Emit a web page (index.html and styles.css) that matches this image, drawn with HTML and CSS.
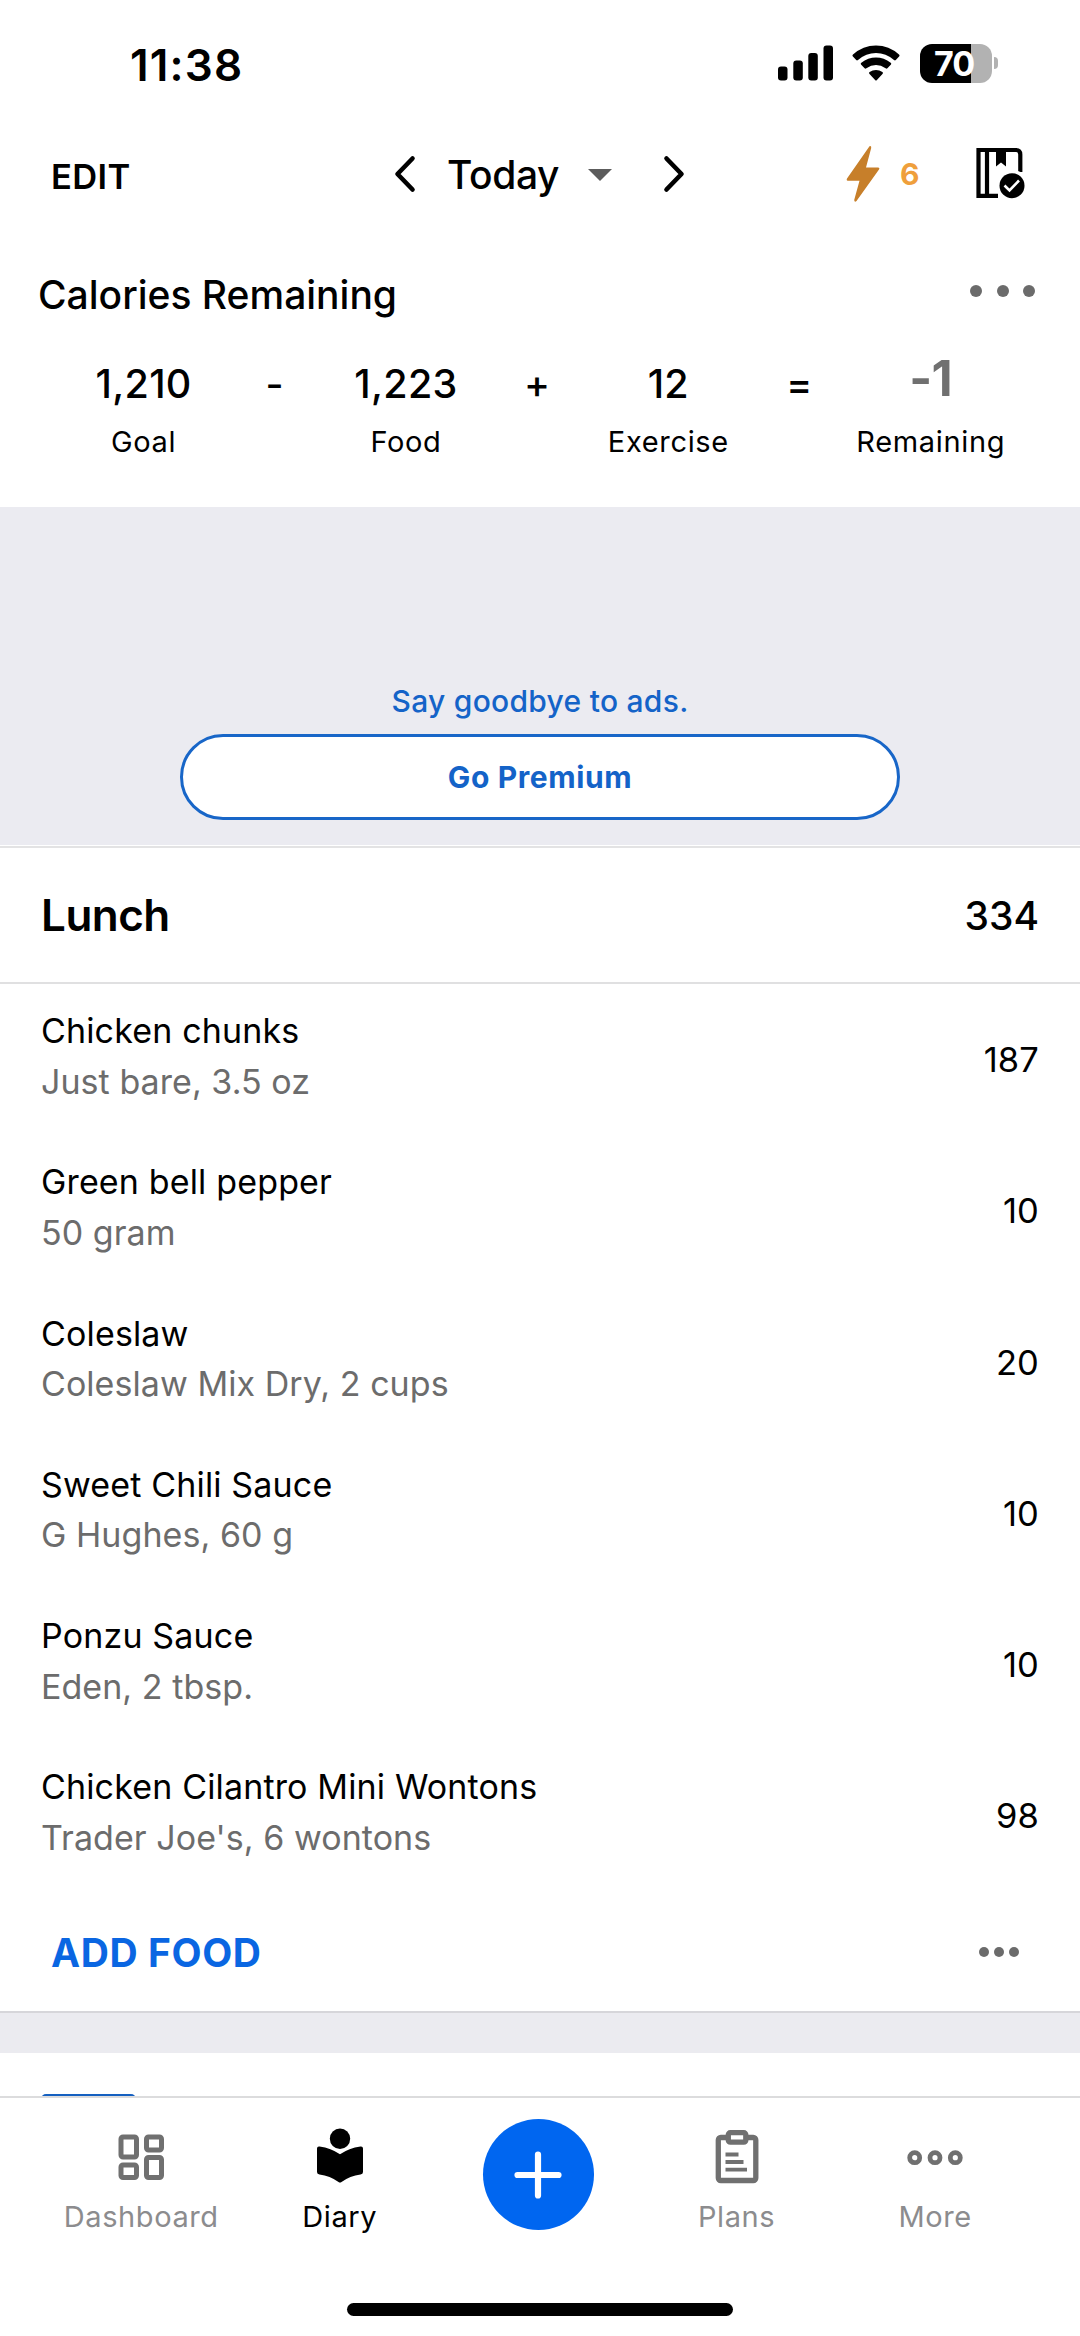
FILE: index.html
```html
<!DOCTYPE html>
<html lang="en">
<head>
<meta charset="utf-8">
<title>Diary</title>
<link rel="stylesheet" href="styles.css">
</head>
<body>
<div class="phone">
  <header class="status">
    <span class="time">11:38</span>
    <div class="status-icons">
      <svg class="signal" width="56" height="36" viewBox="0 0 56 36"><rect x="0" y="21.500" width="9.500" height="14" rx="3"/><rect x="15.300" y="15.500" width="9.500" height="20" rx="3"/><rect x="30.300" y="8" width="9.500" height="27.500" rx="3"/><rect x="45.500" y="0.500" width="9.500" height="35" rx="3"/></svg>
      <svg class="wifi" width="48" height="36" viewBox="0 0 48 36"><path d="M0.700 11.200Q0 10.300 1 9.500Q11 .5 24 .5T47 9.500Q48 10.300 47.300 11.200L43.800 15Q43 15.800 42 15Q34 8 24 8T6 15Q5 15.800 4.200 15Z"/><path d="M9 19.500Q8.300 18.600 9.300 17.800Q16 12.600 24 12.600T38.700 17.800Q39.700 18.600 39 19.500L35.400 23.300Q34.600 24 33.600 23.300Q29 20 24 20T14.400 23.300Q13.400 24 12.600 23.300Z"/><path d="M17.300 28.700Q16.600 27.800 17.600 27.100Q20.500 25 24 25T30.400 27.100Q31.400 27.800 30.700 28.700L24.700 35.200Q24 35.800 23.300 35.200Z"/></svg>
      <div class="battery"><span>70</span></div>
      <i class="battery-tip"></i>
    </div>
  </header>

  <nav class="topbar">
    <span class="edit">EDIT</span>
    <div class="date">
      <svg width="22" height="38" viewBox="0 0 22 38"><path d="M18.500 3.500L3.500 19L18.500 34.500"/></svg>
      <span class="today">Today</span>
      <i class="caret"></i>
      <svg width="22" height="38" viewBox="0 0 22 38"><path d="M3.500 3.500L18.500 19L3.500 34.500"/></svg>
    </div>
    <div class="streak">
      <svg width="34" height="58" viewBox="0 0 34 58"><path d="M23.500 1.200Q25.500 .5 25.200 3L20 22.500H32Q34 22.600 33 24.500L10.500 56Q8.500 58 8.200 55L13.500 35.800H1.500Q0 35.500 1 33.500Z"/></svg>
      <span>6</span>
    </div>
    <svg class="book" width="50" height="52" viewBox="0 0 50 52"><path d="M2.500 3H40Q44.300 3 44.300 7.500V25M2.500 1V51M11 3V49M2.500 48.800H22" fill="none" stroke="#000" stroke-width="4.200"/><path d="M20 3H30V19.500L25 15.500L20 19.500Z"/><circle cx="36" cy="38.700" r="16" fill="#fff"/><circle cx="36" cy="38.700" r="12.500"/><path d="M28.500 38.500L33.500 43.500L43 33.500" fill="none" stroke="#fff" stroke-width="2.600"/></svg>
  </nav>

  <section class="summary">
    <div class="summary-head"><h2>Calories Remaining</h2><div class="dots"><i></i><i></i><i></i></div></div>
    <div class="equation">
      <div class="term"><b>1,210</b><span>Goal</span></div>
      <div class="term"><b class="op">-</b></div>
      <div class="term"><b>1,223</b><span>Food</span></div>
      <div class="term"><b class="op">+</b></div>
      <div class="term"><b>12</b><span>Exercise</span></div>
      <div class="term"><b class="op">=</b></div>
      <div class="term"><b class="result">-1</b><span>Remaining</span></div>
    </div>
  </section>

  <section class="ad">
    <p>Say goodbye to ads.</p>
    <div class="premium">Go Premium</div>
  </section>

  <section class="meal">
    <div class="meal-head"><h1>Lunch</h1><span>334</span></div>
    <ul>
      <li><div><p>Chicken chunks</p><p class="sub">Just bare, 3.5 oz</p></div><span>187</span></li>
      <li><div><p>Green bell pepper</p><p class="sub">50 gram</p></div><span>10</span></li>
      <li><div><p>Coleslaw</p><p class="sub">Coleslaw Mix Dry, 2 cups</p></div><span>20</span></li>
      <li><div><p>Sweet Chili Sauce</p><p class="sub">G Hughes, 60 g</p></div><span>10</span></li>
      <li><div><p>Ponzu Sauce</p><p class="sub">Eden, 2 tbsp.</p></div><span>10</span></li>
      <li><div><p>Chicken Cilantro Mini Wontons</p><p class="sub">Trader Joe's, 6 wontons</p></div><span>98</span></li>
    </ul>
    <div class="add"><span>ADD FOOD</span><div class="dots small"><i></i><i></i><i></i></div></div>
  </section>
  <div class="gap"></div>
  <section class="next"><div class="next-tab"></div></section>

  <footer class="tabs">
    <div class="tab"><svg width="56" height="56" viewBox="0 0 56 56"><g fill="none" stroke="#707070" stroke-width="5"><rect x="8" y="8" width="15.500" height="20" rx="2"/><rect x="33.500" y="8" width="15" height="13" rx="2"/><rect x="8" y="36" width="15.500" height="12.500" rx="2"/><rect x="33.500" y="28.500" width="15" height="20" rx="2"/></g></svg><span>Dashboard</span></div>
    <div class="tab active"><svg width="56" height="56" viewBox="0 0 56 56"><circle cx="28" cy="9.700" r="10.200"/><path d="M5 19.500Q5 17.200 7.500 17.500Q19 19.200 28 25.200Q37 19.200 48.500 17.500Q51 17.200 51 19.500V43Q51 45.200 48.500 45.400Q38 46.600 29.500 53Q28 54.200 26.500 53Q18 46.600 7.500 45.400Q5 45.200 5 43Z"/></svg><span>Diary</span></div>
    <div class="plus"><svg width="50" height="50" viewBox="0 0 50 50"><path d="M25 4.500V45.500M4.500 25H45.500" stroke="#fff" stroke-width="6.200" stroke-linecap="round"/></svg></div>
    <div class="tab"><svg width="56" height="56" viewBox="0 0 56 56"><g fill="none" stroke="#707070"><rect x="9.300" y="8.500" width="37.500" height="43" rx="2.500" stroke-width="5.300"/><rect x="19.300" y="3.700" width="17.500" height="9.500" rx="2" stroke-width="5.300" fill="#fff"/><path d="M16.500 25.500H29.500M16.500 33H34.500M16.500 40.700H38" stroke-width="3.800"/></g></svg><span>Plans</span></div>
    <div class="tab"><svg width="56" height="56" viewBox="0 0 56 56"><g fill="none" stroke="#707070" stroke-width="4.800"><circle cx="7.700" cy="28.700" r="5"/><circle cx="28" cy="28.700" r="5"/><circle cx="48.300" cy="28.700" r="5"/></g></svg><span>More</span></div>
  </footer>
  <div class="home"></div>
</div>
</body>
</html>
```
FILE: styles.css
```css
* { box-sizing: border-box; margin: 0; padding: 0; }
body { background: #fff; font-family: Inter, "Liberation Sans", sans-serif; color: #000; }
svg { display: block; flex: none; overflow: visible; }
ul { list-style: none; }
.phone { width: 1080px; height: 2336px; display: flex; flex-direction: column; overflow: hidden; background: #fff; white-space: nowrap; }
.phone > * { flex: none; }

.status { height: 130px; display: flex; align-items: center; justify-content: space-between; padding: 0 82px 0 130px; }
.time { font-size: 44px; font-weight: 600; letter-spacing: 1.2px; }
.status-icons { display: flex; align-items: center; height: 38px; margin-top: -4px; }
.wifi { margin-left: 18px; }
.battery { margin-left: 19.5px; width: 72px; height: 39px; border-radius: 12px; background: linear-gradient(to right, #000 51px, #b2b2b2 51px); color: #fff; font-size: 34px; font-weight: 700; display: flex; align-items: center; justify-content: center; padding-right: 3px; letter-spacing: -1px; }
.battery-tip { width: 4.5px; height: 12px; margin-left: 2px; border-radius: 0 5px 5px 0; background: #b2b2b2; }

.topbar { height: 88px; display: flex; align-items: center; padding-left: 51px; }
.edit { width: 343px; padding-top: 5px; font-size: 34.5px; font-weight: 600; letter-spacing: 0.4px; }
.date { display: flex; align-items: center; width: 292px; }
.date svg { fill: none; stroke: #000; stroke-width: 4.6; stroke-linecap: round; stroke-linejoin: round; }
.today { width: 142px; margin-left: 31px; font-size: 39px; font-weight: 500; padding-top: 1px; letter-spacing: -0.4px; }
.caret { width: 24px; height: 12px; margin: 2px 51px 0 -1px; flex: none; background: #5c5c5c; clip-path: polygon(0 0, 100% 0, 50% 100%); }
.streak { display: flex; align-items: center; width: 130px; margin-left: 160px; color: #ef9f3c; font-size: 30px; font-weight: 700; }
.streak svg { fill: #c77f2a; margin-right: 20px; }
.book { margin-top: -2px; }

.summary { height: 289px; padding-top: 46px; }
.summary-head { height: 60px; display: flex; justify-content: space-between; align-items: center; padding: 0 45px 0 38px; }
.summary-head h2 { font-size: 39px; font-weight: 500; }
.dots { display: flex; gap: 14.5px; margin-top: -6px; }
.dots i { width: 12px; height: 12px; border-radius: 50%; background: #6b6b6b; }
.equation { display: flex; margin: 31px 0 0 78px; }
.term { width: 131.2px; display: flex; flex-direction: column; align-items: center; }
.term b { height: 58px; line-height: 58px; font-size: 39.5px; font-weight: 500; letter-spacing: 0.3px; }
.term .op { font-size: 39px; }
.term .result { font-size: 49px; font-weight: 700; color: #707070; margin-top: -5px; margin-bottom: 5px; letter-spacing: -0.5px; }
.term span { height: 58px; line-height: 58px; font-size: 29px; letter-spacing: 0.65px; }

.ad { height: 338px; background: #ebebf1; display: flex; flex-direction: column; align-items: center; padding-top: 174px; color: #1463c8; font-size: 30px; }
.ad p { height: 40px; line-height: 40px; font-weight: 500; letter-spacing: 0.28px; }
.premium { margin-top: 13px; width: 720px; height: 86px; border: 3px solid #1866c8; border-radius: 43px; background: #fff; display: flex; align-items: center; justify-content: center; font-weight: 700; letter-spacing: 0.6px; }

.meal { height: 1166px; border-top: 1px solid #fff; }
.meal-head { height: 138px; border-top: 2px solid #e3e3e4; border-bottom: 2px solid #e0e0e1; display: flex; align-items: center; justify-content: space-between; padding: 0 41px 0 41px; }
.meal-head h1 { font-size: 44px; font-weight: 600; letter-spacing: -0.5px; }
.meal-head span { font-size: 39px; font-weight: 500; }
.meal li { height: 151.3px; display: flex; justify-content: space-between; padding: 21px 41px 0 41px; font-size: 34px; letter-spacing: 0.15px; }
.meal li p { height: 50.500px; line-height: 51px; }
.meal li > span { height: 51px; line-height: 51px; margin-top: 29px; font-size: 34.5px; }
.meal .sub { color: #6c6c6c; letter-spacing: 0.05px; }
.add { height: 119px; display: flex; justify-content: space-between; align-items: center; padding: 2px 61px 0 51px; color: #0a66e2; font-size: 39px; font-weight: 700; letter-spacing: 0.6px; }
.dots.small { gap: 4.800px; margin: 0; }
.dots.small i { width: 10.200px; height: 10.200px; }

.gap { height: 42px; border-top: 2px solid #d6d6da; background: #ebebf0; }
.next { height: 43px; padding: 41px 0 0 41px; overflow: hidden; }
.next-tab { width: 95px; height: 20px; border-radius: 5px; background: #1560c0; }

.tabs { height: 194px; border-top: 2px solid #dcdcdd; display: flex; padding-left: 42px; }
.tab { width: 198.5px; display: flex; flex-direction: column; align-items: center; padding-top: 31px; color: #8c8c8e; font-size: 29px; }
.tab span { height: 40px; line-height: 40px; margin-top: 12px; letter-spacing: 0.6px; }
.tab.active { color: #000; }
.plus { width: 111px; height: 111px; margin: 21px 43.7px 0; border-radius: 50%; background: #0066f0; display: flex; align-items: center; justify-content: center; }
.home { width: 386px; height: 13px; margin: 13px 0 0 347px; border-radius: 7px; background: #000; }
```
